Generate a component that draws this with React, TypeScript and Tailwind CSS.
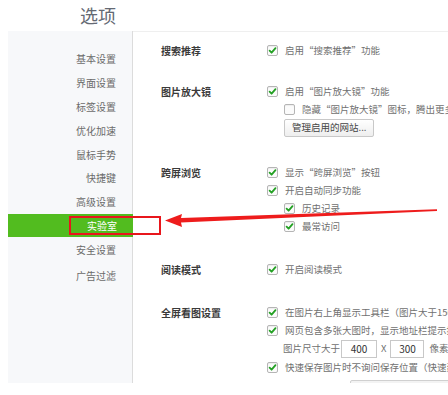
import React from "react";

const F = { fontFamily: '"Noto Sans CJK SC", "Noto Sans", sans-serif' };

function Check({ checked = true }: { checked?: boolean }) {
  return (
    <span className="w-[11px] h-[11px] rounded-[2px] border border-[#b5b5b5] bg-[#fbfbfb] flex items-center justify-center shrink-0 shadow-[inset_0_1px_1px_rgba(0,0,0,0.06)]">
      {checked && (
        <svg width="9" height="9" viewBox="0 0 9 9">
          <path d="M1.6 4.7 L3.6 6.7 L7.5 2.1" stroke="#22a022" strokeWidth="1.8" fill="none" strokeLinecap="round" strokeLinejoin="round" />
        </svg>
      )}
    </span>
  );
}

function Row({ children, indent = false, checked = true, box = true }: { children: React.ReactNode; indent?: boolean; checked?: boolean; box?: boolean }) {
  return (
    <div className={`flex items-center h-[18px] gap-[7px] whitespace-nowrap ${indent ? "pl-[17px]" : ""}`}>
      {box && <Check checked={checked} />}
      <span>{children}</span>
    </div>
  );
}

function Section({ label, children, className = "" }: { label: string; children: React.ReactNode; className?: string }) {
  return (
    <div className={`flex ${className}`}>
      <div className="w-[106px] h-[18px] flex items-center font-bold text-[#3a3a3a] text-[10px] shrink-0 whitespace-nowrap">{label}</div>
      <div className="flex flex-col text-[#707070] text-[9.5px]">{children}</div>
    </div>
  );
}

const items = ["基本设置", "界面设置", "标签设置", "优化加速", "鼠标手势", "快捷键", "高级设置", "实验室", "安全设置", "广告过滤"];

export default function App() {
  return (
    <div className="relative w-[448px] h-[395px] overflow-hidden bg-white text-[10px]" style={F}>
      <div className="h-[31px] pl-[80px] flex items-center text-[18px] text-[#646973]">选项</div>
      <div className="flex h-[352px]">
        <div className="ml-2 w-[125px] shrink-0 bg-[#f7f8fa] border-r border-[#dcdcdc] pt-[16px] flex flex-col">
          {items.map((t, i) => (
            <div
              key={t}
              className={`h-[23.8px] flex items-center justify-end pr-[16px] ${i === 7 ? "bg-[#52bc1f] text-white mr-[-1px]" : "text-[#6b6b6b]"} ${i === 9 ? "mt-[2px]" : ""}`}
            >
              {t}
            </div>
          ))}
        </div>
        <div className="flex-1 border-t border-[#efefef] pl-[28px] pt-[9px] overflow-hidden">
          <Section label="搜索推荐">
            <Row>启用“搜索推荐”功能</Row>
          </Section>
          <Section label="图片放大镜" className="mt-[23px]">
            <Row>启用“图片放大镜”功能</Row>
            <Row indent checked={false}>隐藏“图片放大镜”图标，腾出更多空间</Row>
            <div className="pl-[17px] mt-[1px]">
              <button className="h-[18px] px-[7px] border border-[#c8c8c8] rounded-[2px] bg-gradient-to-b from-[#ffffff] to-[#eeeeee] text-[#444] text-[9.5px] leading-none whitespace-nowrap" style={F}>
                管理启用的网站...
              </button>
            </div>
          </Section>
          <Section label="跨屏浏览" className="mt-[26px]">
            <Row>显示“跨屏浏览”按钮</Row>
            <Row>开启自动同步功能</Row>
            <Row indent>历史记录</Row>
            <Row indent>最常访问</Row>
          </Section>
          <Section label="阅读模式" className="mt-[25px]">
            <Row>开启阅读模式</Row>
          </Section>
          <Section label="全屏看图设置" className="mt-[25px]">
            <Row>在图片右上角显示工具栏（图片大于150×150时）</Row>
            <Row>网页包含多张大图时，显示地址栏提示按钮</Row>
            <div className="flex items-center h-[19px] pl-[16px] whitespace-nowrap">
              <span>图片尺寸大于</span>
              <span className="ml-[1px] w-[36px] h-[18px] border border-[#c8c8c8] bg-white flex items-center justify-center text-[#333] text-[10px]">400</span>
              <span className="mx-[4px]">X</span>
              <span className="w-[34px] h-[18px] border border-[#c8c8c8] bg-white flex items-center justify-center text-[#333] text-[10px]">300</span>
              <span className="ml-[5px]">像素</span>
            </div>
            <Row>快速保存图片时不询问保存位置（快速建议保存）</Row>
            <div className="pl-[83px] mt-[4px]">
              <div className="w-[120px] h-[10px] border border-[#d0d0d0] bg-[#f3f3f3] rounded-[2px]" />
            </div>
          </Section>
        </div>
      </div>

      <div className="absolute left-[69px] top-[216px] w-[92px] h-[19px] border-2 border-[#e8161c]" />
      <svg className="absolute left-0 top-0 pointer-events-none" width="448" height="395" viewBox="0 0 448 395">
        <polygon points="165,220.5 182,214 181,218 437,209.3 437,210.9 181,222.6 182,227" fill="#ee1c1c" />
      </svg>
    </div>
  );
}
